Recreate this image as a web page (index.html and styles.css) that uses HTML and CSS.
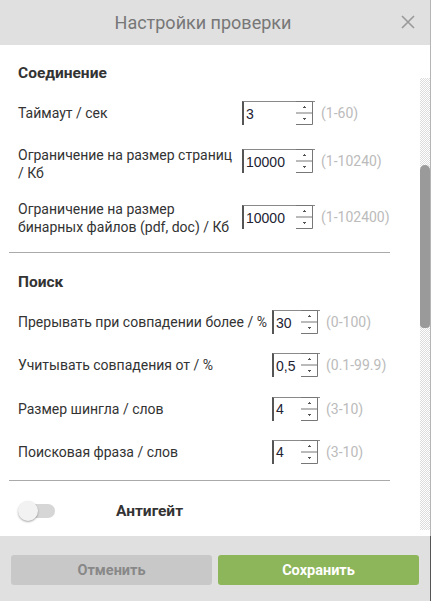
FILE: index.html
```html
<!DOCTYPE html>
<html lang="ru">
<head>
<meta charset="utf-8">
<title>Настройки проверки</title>
<link rel="stylesheet" href="styles.css">
</head>
<body>
<div class="dialog">
  <header class="head">
    <div class="title">Настройки проверки</div>
    <svg class="close" width="14" height="14" viewBox="0 0 14 14"><path d="M1 1L13 13M13 1L1 13" stroke="#999" stroke-width="1.6" fill="none"/></svg>
  </header>
  <div class="main">
    <div class="content">
      <section class="sec sec1">
        <h2 class="sec-title">Соединение</h2>
        <div class="row r1">
          <div class="label">Таймаут / сек</div>
          <div class="field"><div class="num w1"><span class="val">3</span><svg class="spin" width="17" height="24" viewBox="0 0 17 24"><path d="M0 0.5H16.5V23.5H0M0 12H16.5" stroke="#777" fill="none"/><path d="M7 6.5H10M8 5.5H9" stroke="#555" fill="none"/><path d="M7 17.5H10M8 18.5H9" stroke="#555" fill="none"/></svg></div><span class="hint">(1-60)</span></div>
        </div>
        <div class="row r2">
          <div class="label">Ограничение на размер страниц / Кб</div>
          <div class="field"><div class="num w1"><span class="val">10000</span><svg class="spin" width="17" height="24" viewBox="0 0 17 24"><path d="M0 0.5H16.5V23.5H0M0 12H16.5" stroke="#777" fill="none"/><path d="M7 6.5H10M8 5.5H9" stroke="#555" fill="none"/><path d="M7 17.5H10M8 18.5H9" stroke="#555" fill="none"/></svg></div><span class="hint">(1-10240)</span></div>
        </div>
        <div class="row r3">
          <div class="label">Ограничение на размер бинарных файлов (pdf, doc) / Кб</div>
          <div class="field"><div class="num w1"><span class="val">10000</span><svg class="spin" width="17" height="24" viewBox="0 0 17 24"><path d="M0 0.5H16.5V23.5H0M0 12H16.5" stroke="#777" fill="none"/><path d="M7 6.5H10M8 5.5H9" stroke="#555" fill="none"/><path d="M7 17.5H10M8 18.5H9" stroke="#555" fill="none"/></svg></div><span class="hint">(1-102400)</span></div>
        </div>
      </section>
      <hr class="divider">
      <section class="sec sec2">
        <h2 class="sec-title">Поиск</h2>
        <div class="row">
          <div class="label">Прерывать при совпадении более / %</div>
          <div class="field"><div class="num w2"><span class="val">30</span><svg class="spin" width="17" height="24" viewBox="0 0 17 24"><path d="M0 0.5H16.5V23.5H0M0 12H16.5" stroke="#777" fill="none"/><path d="M7 6.5H10M8 5.5H9" stroke="#555" fill="none"/><path d="M7 17.5H10M8 18.5H9" stroke="#555" fill="none"/></svg></div><span class="hint">(0-100)</span></div>
        </div>
        <div class="row">
          <div class="label">Учитывать совпадения от / %</div>
          <div class="field"><div class="num w2"><span class="val">0,5</span><svg class="spin" width="17" height="24" viewBox="0 0 17 24"><path d="M0 0.5H16.5V23.5H0M0 12H16.5" stroke="#777" fill="none"/><path d="M7 6.5H10M8 5.5H9" stroke="#555" fill="none"/><path d="M7 17.5H10M8 18.5H9" stroke="#555" fill="none"/></svg></div><span class="hint">(0.1-99.9)</span></div>
        </div>
        <div class="row">
          <div class="label">Размер шингла / слов</div>
          <div class="field"><div class="num w2"><span class="val">4</span><svg class="spin" width="17" height="24" viewBox="0 0 17 24"><path d="M0 0.5H16.5V23.5H0M0 12H16.5" stroke="#777" fill="none"/><path d="M7 6.5H10M8 5.5H9" stroke="#555" fill="none"/><path d="M7 17.5H10M8 18.5H9" stroke="#555" fill="none"/></svg></div><span class="hint">(3-10)</span></div>
        </div>
        <div class="row">
          <div class="label">Поисковая фраза / слов</div>
          <div class="field"><div class="num w2"><span class="val">4</span><svg class="spin" width="17" height="24" viewBox="0 0 17 24"><path d="M0 0.5H16.5V23.5H0M0 12H16.5" stroke="#777" fill="none"/><path d="M7 6.5H10M8 5.5H9" stroke="#555" fill="none"/><path d="M7 17.5H10M8 18.5H9" stroke="#555" fill="none"/></svg></div><span class="hint">(3-10)</span></div>
        </div>
      </section>
      <hr class="divider">
      <div class="toggle-row">
        <div class="toggle"><span class="track"></span><span class="knob"></span></div>
        <div class="toggle-label">Антигейт</div>
      </div>
    </div>
    <div class="scrollbar"><div class="track-area"><div class="thumb"></div></div></div>
  </div>
  <footer class="foot">
    <button class="btn cancel">Отменить</button>
    <button class="btn save">Сохранить</button>
  </footer>
</div>
</body>
</html>
```
FILE: styles.css
```css
* { box-sizing: border-box; }
html, body { margin: 0; padding: 0; background: #fff; }
body { font-family: Roboto, "Noto Sans", Arial, sans-serif; color: #333; }

.dialog {
  width: 431px;
  height: 601px;
  display: flex;
  flex-direction: column;
  border-right: 1px solid #b5b5b5;
}

.head {
  height: 45px;
  flex: none;
  background: #e0e0e0;
  display: flex;
  align-items: center;
  justify-content: center;
  padding-right: 24px;
  position: relative;
}
.title { font-size: 18px; color: #777; }
.close { position: absolute; right: 15px; top: 15px; }

.main {
  flex: 1;
  display: flex;
  min-height: 0;
}
.content { flex: 1; min-width: 0; }

.sec { padding-left: 18px; }
.sec1 { padding-top: 18px; }
.sec2 { padding-top: 19px; }
.sec-title {
  margin: 0;
  font-size: 15.5px;
  font-weight: 700;
  line-height: 20px;
  color: #333;
}

.row {
  display: grid;
  align-items: center;
}
.sec1 .row { grid-template-columns: 224px auto; }
.sec2 .row { grid-template-columns: 254px auto; margin-top: 19.3px; }
.sec2 .row:first-of-type { margin-top: 18px; }

.sec1 .r1 { margin-top: 18px; }
.sec1 .r2 { margin-top: 21px; align-items: start; }
.sec1 .r3 { margin-top: 18px; align-items: start; }
.sec1 .r2 .field { margin-top: 3px; }
.sec1 .r3 .field { margin-top: 5px; }

.label { font-size: 14px; line-height: 18px; color: #333; white-space: normal; }
.sec1 .label { padding-right: 6px; }
.sec2 .label { white-space: nowrap; }

.field { display: flex; align-items: center; }
.num {
  height: 24px;
  display: flex;
  align-items: center;
  justify-content: space-between;
  border-top: 1px solid #8a8a8a;
  border-left: 2px solid #555;
  background: #fff;
}
.w1 { width: 73px; }
.w2 { width: 48px; }
.val {
  font-family: "Liberation Sans", Arial, sans-serif;
  font-size: 14px;
  color: #223;
  padding-left: 2px;
}
.spin { display: block; margin-top: -1px; margin-right: 2px; }
.hint { font-size: 14px; color: #bbb; margin-left: 6px; }

.divider {
  margin: 16px 0 0 9px;
  width: 381px;
  border: 0;
  border-top: 1px solid #aaa;
  height: 0;
}

.toggle-row {
  display: flex;
  align-items: center;
  padding-left: 18px;
  margin-top: 20px;
}
.toggle { position: relative; width: 38px; height: 20px; }
.track {
  position: absolute;
  left: 2px; top: 3px;
  width: 35px; height: 14px;
  border-radius: 7px;
  background: #d6d6d6;
}
.knob {
  position: absolute;
  left: 0; top: 0;
  width: 20px; height: 20px;
  border-radius: 50%;
  background: #f2f2f2;
  box-shadow: 0 1px 2px rgba(0,0,0,0.35);
}
.toggle-label {
  margin-left: 60px;
  font-size: 15.5px;
  font-weight: 700;
  color: #333;
}

.scrollbar {
  width: 10px;
  flex: none;
  padding: 33px 0 6px;
  display: flex;
}
.track-area {
  flex: 1;
  background: repeating-conic-gradient(#dcdcdc 0 25%, #fff 0 50%) 0 0 / 2px 2px;
  padding-top: 87px;
}
.thumb {
  height: 163px;
  background: #9a9a9a;
  border-radius: 5px 5px 4px 4px;
}

.foot {
  height: 65px;
  flex: none;
  background: #e0e0e0;
  display: flex;
  gap: 6px;
  padding: 19px 11px 0 11px;
  border-right: 1px solid #555;
  margin-right: -1px;
}
.btn {
  width: 201px;
  height: 30px;
  border: 0;
  border-radius: 3px;
  font-family: Roboto, "Noto Sans", Arial, sans-serif;
  font-size: 14.5px;
  font-weight: 700;
}
.cancel { background: #c8c8c8; color: #888; }
.save { background: #8db55a; color: #fff; }
```
